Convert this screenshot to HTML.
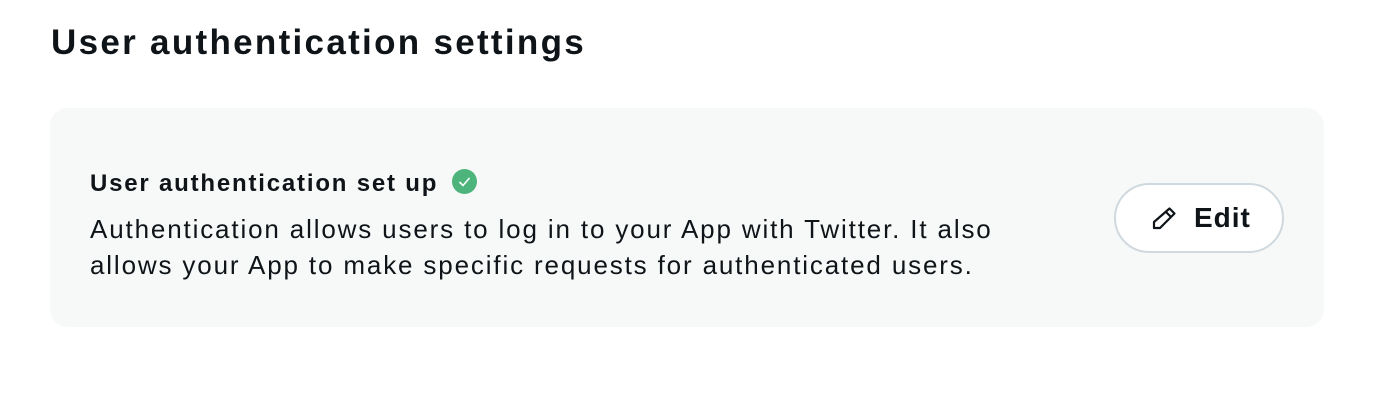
<!DOCTYPE html>
<html><head><style>
body{margin:0;width:1378px;height:412px;background:#fff;font-family:"Liberation Sans",sans-serif;color:#0f1419;position:relative;overflow:hidden}
h1{position:absolute;left:51px;top:23px;margin:0;font-size:35px;font-weight:700;letter-spacing:2.3px;white-space:nowrap}
.card{position:absolute;left:50px;top:108px;width:1274px;height:219px;background:#f7f8f8;border-radius:18px}
.t{position:absolute;left:90px;top:170px;font-size:24px;font-weight:700;letter-spacing:1.8px;white-space:nowrap}
.chk{position:absolute;left:452px;top:169px;width:25px;height:25px;border-radius:50%;background:#4db57b}
.d{position:absolute;left:90px;top:211px;font-size:26px;line-height:36px;letter-spacing:1.85px;color:#0f1419;white-space:nowrap}
.btn{position:absolute;left:1114px;top:183px;width:170px;height:70px;box-sizing:border-box;border:2px solid #cfd9de;border-radius:35px;background:#fff}
.btn span{position:absolute;left:78px;top:17px;font-size:28px;font-weight:700;letter-spacing:1px}
</style></head><body>
<h1>User authentication settings</h1>
<div class="card"></div>
<div class="t">User authentication set up</div>
<div class="chk"><svg width="25" height="25"><path d="M7.5 13l3.5 3.5 6.5-7.5" fill="none" stroke="#fff" stroke-width="1.6"/></svg></div>
<div class="d">Authentication allows users to log in to your App with Twitter. It also<br>allows your App to make specific requests for authenticated users.</div>
<div class="btn"><svg style="position:absolute;left:34px;top:20px" width="28" height="28" viewBox="0 0 28 28"><path d="M19.5 3.5l5 5L10 23H4v-6z M16 7l5 5" fill="none" stroke="#0f1419" stroke-width="2.2" stroke-linejoin="round"/></svg><span>Edit</span></div>
</body></html>
